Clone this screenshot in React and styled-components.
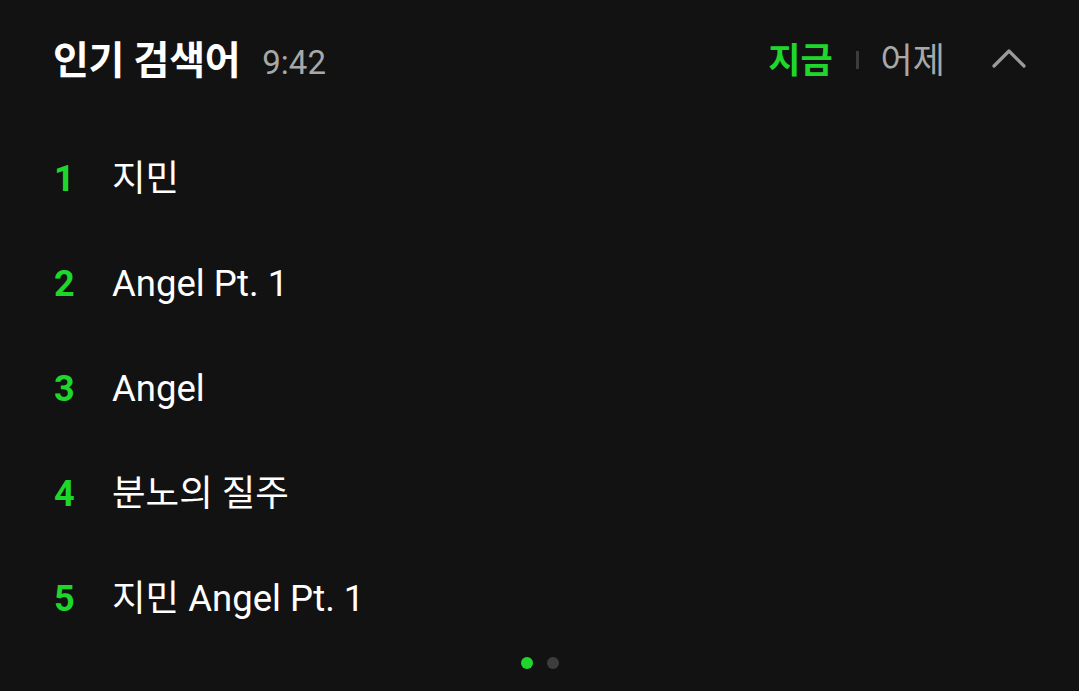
import React from 'react';
import styled, { createGlobalStyle } from 'styled-components';

const GREEN = '#1fd72c';

const GlobalStyle = createGlobalStyle`
  html, body {
    margin: 0;
    padding: 0;
    background: #121212;
  }
  body {
    font-family: Roboto, "Noto Sans CJK KR", sans-serif;
  }
`

const Panel = styled.div`
  width: 1079px;
  height: 691px;
  background: #121212;
  overflow: hidden;
`

const Header = styled.div`
  display: flex;
  align-items: center;
  justify-content: space-between;
  height: 114px;
  padding: 0 52px 0 53px;
  box-sizing: border-box;
`

const TitleGroup = styled.div`
  display: flex;
  align-items: baseline;
  gap: 22px;
`

const Title = styled.h1`
  margin: 0;
  font-size: 39px;
  font-weight: 700;
  color: #fff;
  letter-spacing: -0.3px;
`

const Time = styled.span`
  font-size: 33px;
  color: #a8a8a8;
`

const Controls = styled.div`
  display: flex;
  align-items: center;
`

const Tab = styled.span`
  font-size: 35px;
  font-weight: ${props => (props.active ? 700 : 400)};
  color: ${props => (props.active ? GREEN : '#a8a8a8')};
`

const Divider = styled.span`
  width: 3px;
  height: 18px;
  background: #3c3c3c;
  margin: 6px 22px 0 23px;
`

const Chevron = styled.svg`
  margin: 2px 0 0 46px;
  width: 36px;
  height: 22px;
`

const List = styled.ol`
  list-style: none;
  margin: 0;
  padding: 12px 54px 0;
`

const Row = styled.li`
  display: flex;
  align-items: baseline;
  height: 105px;
  line-height: 105px;
`

const Rank = styled.span`
  width: 58px;
  font-size: 36px;
  font-weight: 700;
  color: ${GREEN};
`

const Keyword = styled.span`
  font-size: 36.5px;
  color: #fff;
`

const Dots = styled.div`
  display: flex;
  justify-content: center;
  gap: 14px;
  margin-top: 6px;
`

const Dot = styled.span`
  width: 12px;
  height: 12px;
  border-radius: 50%;
  background: ${props => (props.active ? GREEN : '#3d3d3d')};
`

const keywords = ['지민', 'Angel Pt. 1', 'Angel', '분노의 질주', '지민 Angel Pt. 1'];

export default function App() {
  return (
    <Panel>
      <GlobalStyle />
      <Header>
        <TitleGroup>
          <Title>인기 검색어</Title>
          <Time>9:42</Time>
        </TitleGroup>
        <Controls>
          <Tab active>지금</Tab>
          <Divider />
          <Tab>어제</Tab>
          <Chevron viewBox="0 0 36 22">
            <path d="M3 19 L18 4 L33 19" fill="none" stroke="#9a9a9a" strokeWidth="3.2" strokeLinecap="round" strokeLinejoin="round" />
          </Chevron>
        </Controls>
      </Header>
      <List>
        {keywords.map((k, i) => (
          <Row key={i}>
            <Rank>{i + 1}</Rank>
            <Keyword>{k}</Keyword>
          </Row>
        ))}
      </List>
      <Dots>
        <Dot active />
        <Dot />
      </Dots>
    </Panel>
  );
}
